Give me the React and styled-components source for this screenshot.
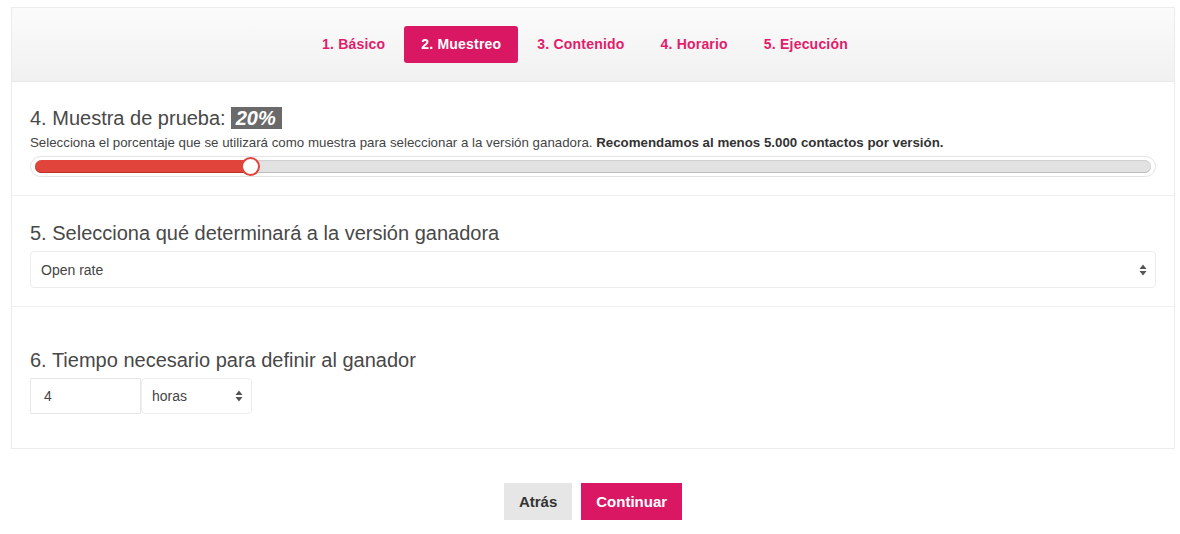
import React, { useState } from 'react';
import styled, { createGlobalStyle } from 'styled-components';

const GlobalStyle = createGlobalStyle`
  body {
    margin: 0;
    background: #ffffff;
    font-family: "Liberation Sans", Arial, sans-serif;
    color: #444;
  }
`;

const Page = styled.div`
  padding: 7px 5px 0 11px;
`;

const Panel = styled.div`
  border: 1px solid #ececec;
  background: #fff;
`;

const StepsBar = styled.div`
  display: flex;
  justify-content: center;
  align-items: center;
  gap: 2px;
  height: 73px;
  padding-right: 16px;
  background: linear-gradient(#fbfbfb, #f1f1f1);
  border-bottom: 1px solid #e9e9e9;
`;

const Step = styled.a`
  display: block;
  padding: 0 17px;
  height: 37px;
  line-height: 37px;
  border-radius: 3px;
  font-size: 14px;
  font-weight: bold;
  letter-spacing: 0.2px;
  text-decoration: none;
  color: ${(p) => (p.$active ? '#fff' : '#e21c6b')};
  background: ${(p) => (p.$active ? '#d91763' : 'transparent')};
`;

const Section = styled.div`
  padding: ${(p) => p.$pad || '24px 18px 18px'};
  border-bottom: ${(p) => (p.$last ? 'none' : '1px solid #efefef')};
`;

const Title = styled.h3`
  margin: 0;
  font-size: 20px;
  line-height: 24px;
  font-weight: normal;
  color: #484848;
  display: flex;
  align-items: center;
  gap: 5px;
`;

const Badge = styled.span`
  display: inline-block;
  background: #6a6a6a;
  color: #fff;
  font-weight: bold;
  font-style: italic;
  font-size: 20px;
  line-height: 22px;
  padding: 0 6px 0 5px;
`;

const Hint = styled.p`
  margin: 5px 0 6px;
  font-size: 13.3px;
  line-height: 15px;
  color: #444;

  b {
    color: #333;
  }
`;

const SliderOuter = styled.div`
  height: 21px;
  border-radius: 11px;
  border: 1px solid #e4e4e4;
  box-sizing: border-box;
  padding: 3px 4px;
  background: #fff;
`;

const SliderTrack = styled.div`
  position: relative;
  height: 13px;
  border-radius: 7px;
  background: #e2e2e2;
  box-shadow: inset 0 -1px 0 #bdbdbd, inset 0 1px 1px #d0d0d0;
`;

const SliderFill = styled.div`
  height: 100%;
  border-radius: 7px 0 0 7px;
  background: #e0443a;
  box-shadow: inset 0 -1px 0 #b8322a;
`;

const Thumb = styled.div`
  position: absolute;
  top: 50%;
  width: 19px;
  height: 19px;
  margin: -9.5px 0 0 -9.5px;
  border-radius: 50%;
  box-sizing: border-box;
  border: 2px solid #e0443a;
  background: #fff;
`;

const SelectBox = styled.div`
  display: flex;
  align-items: center;
  justify-content: space-between;
  box-sizing: border-box;
  height: ${(p) => p.$h || 37}px;
  width: ${(p) => (p.$w ? `${p.$w}px` : 'auto')};
  padding: 0 ${(p) => p.$pr || 8}px 0 ${(p) => p.$pl || 10}px;
  margin-top: ${(p) => p.$mt || 0}px;
  border: 1px solid #ececec;
  border-radius: 4px;
  font-size: 14px;
  color: #444;
  background: #fff;
`;

const Row = styled.div`
  display: flex;
  margin-top: 6px;
`;

const NumberInput = styled.div`
  box-sizing: border-box;
  width: 111px;
  height: 36px;
  line-height: 34px;
  padding-left: 13px;
  border: 1px solid #e8e8e8;
  font-size: 14px;
  color: #444;
`;

const Actions = styled.div`
  display: flex;
  justify-content: center;
  gap: 9px;
  padding-top: 34px;
`;

const Button = styled.button`
  border: none;
  height: 37px;
  padding: 0 15px;
  font-family: "Liberation Sans", Arial, sans-serif;
  font-size: 15px;
  font-weight: bold;
  color: ${(p) => (p.$primary ? '#fff' : '#333')};
  background: ${(p) => (p.$primary ? '#d91763' : '#e6e6e6')};
  cursor: pointer;
`;

const Arrows = () => (
  <svg width="8" height="12" viewBox="0 0 8 12">
    <path d="M4 0.5 L7.5 5 H0.5 Z" fill="#555" />
    <path d="M4 11.5 L7.5 7 H0.5 Z" fill="#555" />
  </svg>
);

const steps = ['1. Básico', '2. Muestreo', '3. Contenido', '4. Horario', '5. Ejecución'];

export default function App() {
  const [sample] = useState(20);

  return (
    <Page>
      <GlobalStyle />
      <Panel>
        <StepsBar>
          {steps.map((s, i) => (
            <Step key={s} $active={i === 1}>{s}</Step>
          ))}
        </StepsBar>

        <Section>
          <Title>
            4. Muestra de prueba: <Badge>{sample}%</Badge>
          </Title>
          <Hint>
            Selecciona el porcentaje que se utilizará como muestra para seleccionar a la versión ganadora.{' '}
            <b>Recomendamos al menos 5.000 contactos por versión.</b>
          </Hint>
          <SliderOuter>
            <SliderTrack>
              <SliderFill style={{ width: `${sample * 0.965}%` }} />
              <Thumb style={{ left: `${sample * 0.965}%` }} />
            </SliderTrack>
          </SliderOuter>
        </Section>

        <Section $pad="25px 18px 18px">
          <Title>5. Selecciona qué determinará a la versión ganadora</Title>
          <SelectBox $mt={6}>
            <span>Open rate</span>
            <Arrows />
          </SelectBox>
        </Section>

        <Section $pad="41px 18px 34px" $last>
          <Title>6. Tiempo necesario para definir al ganador</Title>
          <Row>
            <NumberInput>4</NumberInput>
            <SelectBox $w={111} $h={36}>
              <span>horas</span>
              <Arrows />
            </SelectBox>
          </Row>
        </Section>
      </Panel>

      <Actions>
        <Button>Atrás</Button>
        <Button $primary>Continuar</Button>
      </Actions>
    </Page>
  );
}
